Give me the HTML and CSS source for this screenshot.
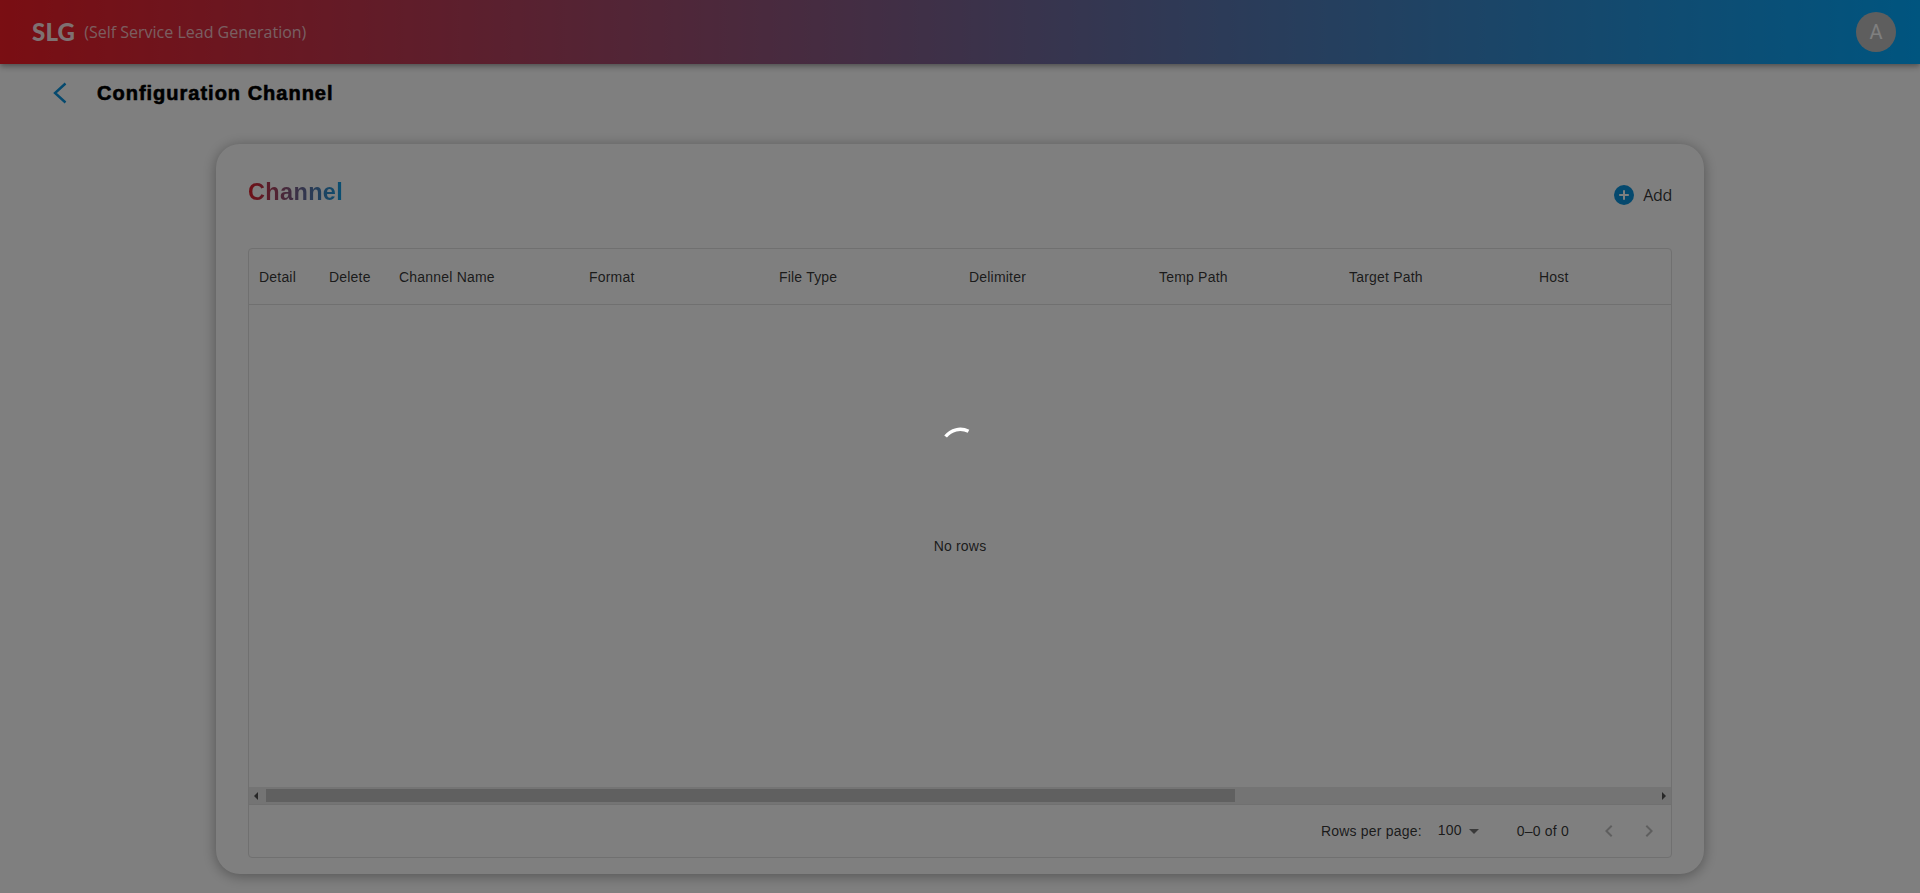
FILE: index.html
```html
<!DOCTYPE html>
<html lang="en">
<head>
<meta charset="utf-8">
<title>Configuration Channel</title>
<link rel="stylesheet" href="styles.css">
</head>
<body>
<header class="appbar">
  <div class="brand"><span class="logo">SLG</span><span class="subtitle">(Self Service Lead Generation)</span></div>
  <div class="avatar">A</div>
</header>
<div class="pagehead">
  <button class="back" aria-label="Back"><svg width="24" height="24" viewBox="0 0 24 24"><path d="M17.5 2.5 7 12l10.5 9.5" fill="none" stroke="#0a93dc" stroke-width="2.4"/></svg></button>
  <h1>Configuration Channel</h1>
</div>
<main class="card">
  <div class="cardhead">
    <h2>Channel</h2>
    <div class="add">
      <svg width="20" height="20" viewBox="0 0 20 20"><circle cx="10" cy="10" r="10" fill="#0a93dc"/><path d="M10 5.2v9.6M5.2 10h9.6" stroke="#fff" stroke-width="2"/></svg>
      <span>Add</span>
    </div>
  </div>
  <section class="grid">
    <div class="thead">
      <div class="th narrow">Detail</div>
      <div class="th narrow">Delete</div>
      <div class="th">Channel Name</div>
      <div class="th">Format</div>
      <div class="th">File Type</div>
      <div class="th">Delimiter</div>
      <div class="th">Temp Path</div>
      <div class="th">Target Path</div>
      <div class="th">Host</div>
    </div>
    <div class="tbody">No rows</div>
    <div class="hscroll">
      <span class="arrow left"></span>
      <div class="track"><div class="thumb"></div></div>
      <span class="arrow right"></span>
    </div>
    <div class="tfoot">
      <span class="rows-label">Rows per page:</span>
      <span class="rows-select"><span class="rows-value">100</span><svg width="24" height="24" viewBox="0 0 24 24"><path d="M7 10l5 5 5-5z" fill="rgba(0,0,0,.54)"/></svg></span>
      <span class="range">0–0 of 0</span>
      <div class="pager">
        <svg width="24" height="24" viewBox="0 0 24 24"><path d="M15.41 7.41 14 6l-6 6 6 6 1.41-1.41L10.83 12z" fill="rgba(0,0,0,.26)"/></svg>
        <svg width="24" height="24" viewBox="0 0 24 24"><path d="M10 6 8.59 7.41 13.17 12l-4.58 4.59L10 18l6-6z" fill="rgba(0,0,0,.26)"/></svg>
      </div>
    </div>
  </section>
</main>
<div class="backdrop">
  <svg class="spinner" width="40" height="40" viewBox="0 0 40 40"><path d="M5.6 9.6A18.3 18.3 0 0 1 28.5 4.3" fill="none" stroke="#fff" stroke-width="3.4"/></svg>
</div>
</body>
</html>
```
FILE: styles.css
```css
* { box-sizing: border-box; }
html, body { height: 100%; }
body {
  margin: 0;
  background: #fff;
  font-family: "Liberation Sans", Arial, sans-serif;
  color: rgba(0,0,0,.8);
  overflow: hidden;
}
.appbar {
  height: 64px;
  padding: 0 24px 0 32px;
  display: flex;
  align-items: center;
  justify-content: space-between;
  background: linear-gradient(90deg, #f41c26, #00aaff);
  box-shadow: 0 2px 4px -1px rgba(0,0,0,.2), 0 4px 5px 0 rgba(0,0,0,.14), 0 1px 10px 0 rgba(0,0,0,.12);
  position: relative;
}
.brand { display: flex; align-items: center; gap: 9px; color: #fff; }
.logo { font: 900 24px/1 Lato, sans-serif; letter-spacing: .2px; color: rgba(255,255,255,.9); }
.subtitle { font: 400 16px/24px "Open Sans", sans-serif; color: rgba(255,255,255,.7); }
.avatar {
  width: 40px; height: 40px; border-radius: 50%;
  background: #bdbdbd; color: #fff;
  display: flex; align-items: center; justify-content: center;
  font: 400 20px/1 Roboto, sans-serif;
}
.pagehead { height: 48px; padding: 9px 0 0 48px; display: flex; align-items: center; }
.back { width: 24px; height: 24px; padding: 0; border: 0; background: none; margin-right: 25px; }
h1 { margin: 2px 0 0; font-size: 20px; font-weight: 900; letter-spacing: 1px; color: #000; -webkit-text-stroke: .6px #000; }
.card {
  width: 1488px;
  height: 730px;
  margin: 32px auto 0;
  padding: 32px 32px 16px;
  background: #fff;
  border-radius: 24px;
  box-shadow: 0 2px 14px rgba(0,0,0,.35);
  display: flex;
  flex-direction: column;
}
.cardhead { height: 72px; display: flex; justify-content: space-between; align-items: flex-start; }
h2 {
  margin: 1px 0 0;
  font-size: 23.5px;
  line-height: 30px;
  font-weight: 700;
  letter-spacing: .35px;
  background: linear-gradient(90deg, #e0202c, #10a0e8);
  -webkit-background-clip: text;
  background-clip: text;
  color: transparent;
}
.add { display: flex; align-items: center; gap: 9px; margin-top: 7px; font: 400 16px/24px "Open Sans", sans-serif; letter-spacing: -.3px; }
.grid {
  flex: 1;
  border: 1px solid #e0e0e0;
  border-radius: 4px;
  display: flex;
  flex-direction: column;
  min-height: 0;
  font-size: 14px;
  letter-spacing: .2px;
}
.thead { height: 56px; display: flex; align-items: center; overflow: hidden; border-bottom: 1px solid #e0e0e0; flex: none; }
.th { flex: 0 0 190px; padding: 0 10px; }
.th.narrow { flex-basis: 70px; }
.tbody { flex: 1; min-height: 0; display: flex; align-items: center; justify-content: center; }
.hscroll { height: 18px; flex: none; background: #e8e8e8; display: flex; align-items: center; border-bottom: 1px solid #e0e0e0; }
.track { flex: 1; height: 13px; margin: 0 5px 0 3px; }
.thumb { width: 969px; height: 100%; background: #c1c1c1; }
.arrow { width: 0; height: 0; margin: 0 5px; border-style: solid; border-width: 4px 0; border-color: transparent; }
.arrow.left { border-right: 4px solid #505050; }
.arrow.right { border-left: 4px solid #505050; }
.tfoot { flex: none; height: 52px; display: flex; align-items: center; justify-content: flex-end; padding-right: 4px; }
.rows-label { margin-right: 16px; }
.rows-select { display: flex; align-items: center; margin-right: 31px; }
.rows-value { padding-bottom: 2px; }
.range { margin-right: 28px; }
.pager { display: flex; gap: 16px; margin-right: 6px; }
.backdrop {
  position: fixed; inset: 0;
  background: rgba(0,0,0,.5);
  display: flex; align-items: center; justify-content: center;
}
```
